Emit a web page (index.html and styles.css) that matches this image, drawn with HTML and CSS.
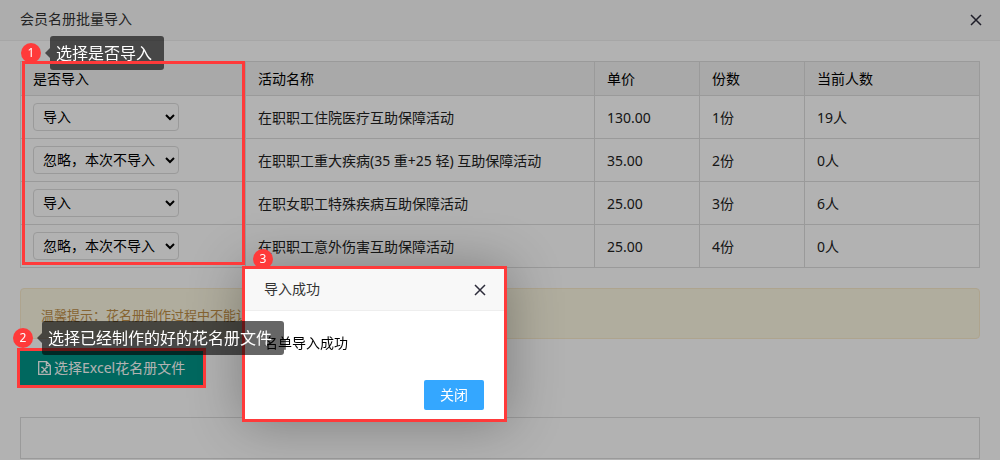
FILE: index.html
```html
<!DOCTYPE html>
<html lang="zh-CN">
<head>
<meta charset="utf-8">
<title>会员名册批量导入</title>
<link rel="stylesheet" href="styles.css">
</head>
<body>
<header class="page-head">
  <h1 class="page-title">会员名册批量导入</h1>
  <button class="close" type="button" aria-label="关闭窗口">
    <svg width="12" height="12" viewBox="0 0 12 12"><path d="M1 1L11 11M11 1L1 11"/></svg>
  </button>
</header>
<main class="content">
  <div class="table-wrap">
    <table class="grid">
      <colgroup><col class="col-pick"><col><col class="col-num"><col class="col-num"><col class="col-count"></colgroup>
      <thead>
        <tr><th>是否导入</th><th>活动名称</th><th>单价</th><th>份数</th><th>当前人数</th></tr>
      </thead>
      <tbody>
        <tr>
          <td><select class="pick" aria-label="是否导入"><option selected>导入</option><option>忽略，本次不导入</option></select></td>
          <td>在职职工住院医疗互助保障活动</td><td>130.00</td><td>1份</td><td>19人</td>
        </tr>
        <tr>
          <td><select class="pick" aria-label="是否导入"><option>导入</option><option selected>忽略，本次不导入</option></select></td>
          <td>在职职工重大疾病(35 重+25 轻) 互助保障活动</td><td>35.00</td><td>2份</td><td>0人</td>
        </tr>
        <tr>
          <td><select class="pick" aria-label="是否导入"><option selected>导入</option><option>忽略，本次不导入</option></select></td>
          <td>在职女职工特殊疾病互助保障活动</td><td>25.00</td><td>3份</td><td>6人</td>
        </tr>
        <tr>
          <td><select class="pick" aria-label="是否导入"><option>导入</option><option selected>忽略，本次不导入</option></select></td>
          <td>在职职工意外伤害互助保障活动</td><td>25.00</td><td>4份</td><td>0人</td>
        </tr>
      </tbody>
    </table>
    <div class="callout callout-pick"><span class="badge">1</span><span class="tip">选择是否导入</span></div>
    <div class="frame frame-pick"></div>
  </div>
  <p class="notice">温馨提示：花名册制作过程中不能让</p>
  <div class="upload">
    <button class="upload-btn" type="button">
      <svg class="file-icon" width="13" height="14" viewBox="0 0 13 14"><path d="M.7 .7H8.6L12.3 4.4V13.3H.7ZM8.4 .7V4.6H12.3"/><path class="file-mark" d="M3.2 6.4H5.4M7.6 6.4H9.8M3.2 11H5.4M7.6 11H9.8M4.4 6.4L8.6 11M8.6 6.4L4.4 11"/></svg>
      选择Excel花名册文件
    </button>
    <div class="frame frame-upload"></div>
    <div class="callout callout-upload"><span class="badge">2</span><span class="tip">选择已经制作的好的花名册文件</span></div>
  </div>
  <div class="result"></div>
</main>
<div class="shade"></div>
<section class="dialog" role="dialog" aria-labelledby="dialog-title">
  <header class="dialog-head">
    <h2 class="dialog-title" id="dialog-title">导入成功</h2>
    <button class="close" type="button" aria-label="关闭对话框">
      <svg width="12" height="12" viewBox="0 0 12 12"><path d="M1 1L11 11M11 1L1 11"/></svg>
    </button>
  </header>
  <p class="dialog-body">名单导入成功</p>
  <footer class="dialog-foot"><button class="dialog-btn" type="button">关闭</button></footer>
  <span class="badge badge-dialog">3</span>
</section>
</body>
</html>
```
FILE: styles.css
```css
* { box-sizing: border-box; }
body {
  margin: 0;
  background: #fff;
  color: #222;
  font: 14px/20px "Noto Sans", "Noto Sans CJK SC", sans-serif;
}
button, select { font: inherit; cursor: pointer; }
h1, h2, p { margin: 0; font-size: 14px; font-weight: 400; }

.page-head, .dialog-head {
  display: flex;
  align-items: center;
  justify-content: space-between;
  background: #f8f8f8;
  border-bottom: 1px solid #eee;
  color: #333;
}
.page-head { height: 41px; padding: 0 18px 2px 20px; }
.close { display: flex; margin-top: 2px; padding: 0; border: 0; background: none; }
.close svg { fill: none; stroke: #2d2c3b; stroke-width: 1.5; }

.content { padding: 20px 20px 0; }
.table-wrap { position: relative; }
.grid { width: 100%; border-collapse: collapse; table-layout: fixed; }
.grid th, .grid td {
  padding: 0 12px;
  border: 1px solid #ddd;
  text-align: left;
  font-weight: 400;
}
.grid th { height: 34px; background: #f2f2f2; color: #000; }
.grid td { height: 43px; }
.grid td:not(:first-child) { padding-top: 2px; }
.col-pick { width: 225px; }
.col-num { width: 105px; }
.col-count { width: 175px; }
.pick {
  display: block;
  width: 146px;
  height: 28px;
  padding: 0 1px 1px 5px;
  border: 1px solid #ddd;
  border-radius: 4px;
  background: #fff;
  color: #000;
}

.notice {
  margin-top: 20px;
  padding: 16px 20px 13px;
  border: 1px solid #faebcc;
  border-radius: 4px;
  background: #fcf8e3;
  color: #c09048;
  font-size: 13px;
}
.upload { position: relative; display: flex; width: max-content; margin-top: 10px; }
.upload-btn {
  display: flex;
  align-items: center;
  gap: 3px;
  height: 38px;
  padding: 0 18px;
  border: 0;
  background: #009688;
  color: #fff;
}
.file-icon { fill: none; stroke: #fff; stroke-width: 1.3; }
.file-mark { stroke-width: 1.4; }
.result { height: 42px; margin-top: 30px; border: 1px solid #ddd; }

.shade { position: fixed; inset: 0; z-index: 1; background: rgba(0, 0, 0, .3); }

.dialog {
  position: absolute;
  top: 266px;
  left: 242px;
  z-index: 2;
  width: 265px;
  border: 3px solid #ff3a3a;
  background: #fff;
  box-shadow: 1px 1px 50px rgba(0, 0, 0, .3);
}
.dialog-head { height: 42px; padding: 0 18px 2px 19px; }
.dialog-body { padding: 22px 19px; color: #000; }
.dialog-foot { display: flex; justify-content: flex-end; padding: 5px 20px 9px; }
.dialog-btn {
  height: 30px;
  padding: 0 16px;
  border: 0;
  border-radius: 2px;
  background: #34a7ff;
  color: #fff;
}

.frame { position: absolute; z-index: 3; border: 3px solid #ff3a3a; pointer-events: none; }
.frame-pick { top: 0; left: 2px; width: 223px; height: 204px; }
.frame-upload { inset: -1px -3px; }
.badge {
  display: flex;
  align-items: center;
  justify-content: center;
  width: 20px;
  height: 20px;
  border-radius: 50%;
  background: #ff3a3a;
  color: #fff;
  font-size: 12px;
}
.badge-dialog { position: absolute; top: -20px; left: 8px; }
.callout { position: absolute; display: flex; align-items: center; gap: 9px; white-space: nowrap; }
.callout-pick { top: -25px; left: 1px; z-index: 3; }
.callout-upload { top: -28px; left: -7px; z-index: 4; }
.tip {
  position: relative;
  padding: 5px 12px 5px 6px;
  border-radius: 3px;
  background: rgba(0, 0, 0, .6);
  color: #fff;
  font-size: 16px;
  line-height: 24px;
}
.tip::before {
  content: "";
  position: absolute;
  top: 12px;
  right: 100%;
  border: 5px solid transparent;
  border-left: 0;
  border-right-color: rgba(0, 0, 0, .6);
}
```
